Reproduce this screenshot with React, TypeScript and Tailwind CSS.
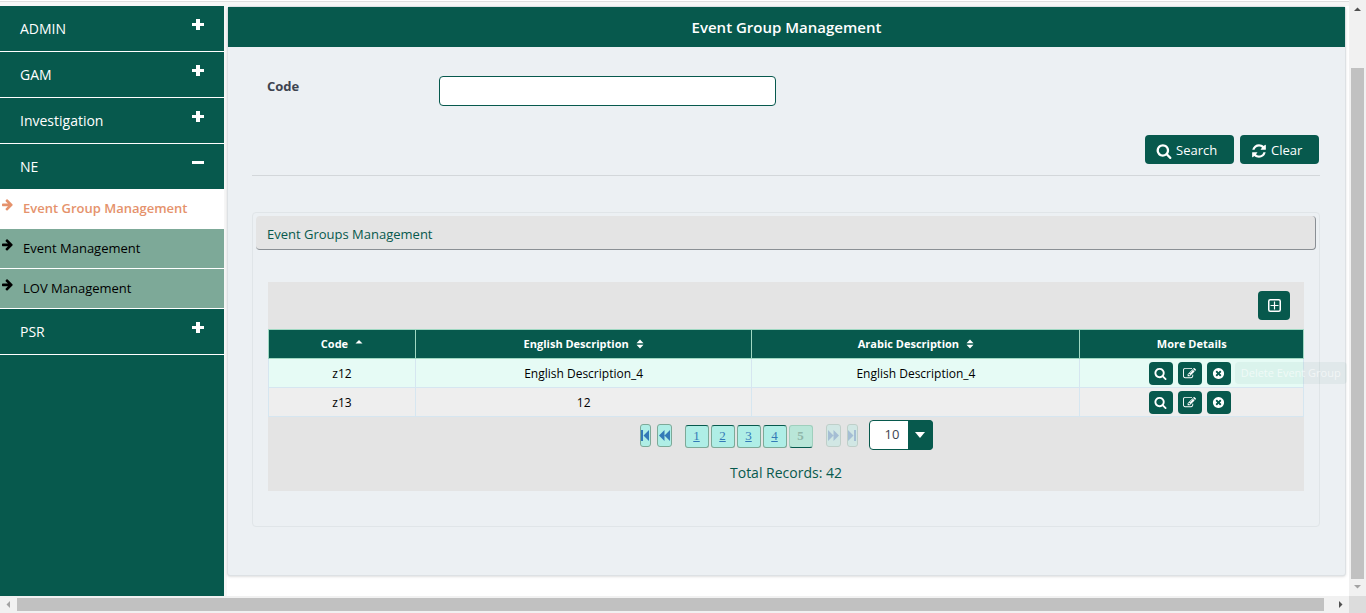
import React, { useState } from "react";

const PATHS = {
  search:
    "M1216 832q0-185-131.5-316.5t-316.5-131.5-316.5 131.5-131.5 316.5 131.5 316.5 316.5 131.5 316.5-131.5 131.5-316.5zm512 832q0 52-38 90t-90 38q-54 0-90-38l-343-342q-179 124-399 124-143 0-273.5-55.5t-225-150-150-225-55.5-273.5 55.5-273.5 150-225 225-150 273.5-55.5 273.5 55.5 225 150 150 225 55.5 273.5q0 220-124 399l343 343q37 37 37 90z",
  refresh:
    "M1639 1056q0 5-1 7-64 268-268 434.5t-478 166.5q-146 0-282.5-55t-243.5-157l-129 129q-19 19-45 19t-45-19-19-45v-448q0-26 19-45t45-19h448q26 0 45 19t19 45-19 45l-137 137q71 66 161 102t187 36q134 0 250-65t186-179q11-17 53-117 8-23 30-23h192q13 0 22.5 9.5t9.5 22.5zm25-800v448q0 26-19 45t-45 19h-448q-26 0-45-19t-19-45 19-45l138-138q-148-137-349-137-134 0-250 65t-186 179q-11 17-53 117-8 23-30 23h-199q-13 0-22.5-9.5t-9.5-22.5v-7q65-268 270-434.5t480-166.5q146 0 284 55.5t245 156.5l130-129q19-19 45-19t45 19 19 45z",
  edit:
    "M888 1184l116-116-152-152-116 116v56h96v96h56zm440-720q-16-16-33 1l-350 350q-17 17-1 33t33-1l350-350q17-17 1-33zm80 594v190q0 119-84.5 203.5t-203.5 84.5h-832q-119 0-203.5-84.5t-84.5-203.5v-832q0-119 84.5-203.5t203.5-84.5h832q63 0 117 25 15 7 18 23 3 17-9 29l-49 49q-14 14-32 8-23-6-45-6h-832q-66 0-113 47t-47 113v832q0 66 47 113t113 47h832q66 0 113-47t47-113v-126q0-13 9-22l64-64q15-15 35-7t20 29zm-96-738l288 288-672 672h-288v-288zm444 132l-92 92-288-288 92-92q28-28 68-28t68 28l152 152q28 28 28 68t-28 68z",
  remove:
    "M1277 1122q0-26-19-45l-181-181 181-181q19-19 19-45 0-27-19-46l-90-90q-19-19-46-19-26 0-45 19l-181 181-181-181q-19-19-45-19-27 0-46 19l-90 90q-19 19-19 46 0 26 19 45l181 181-181 181q-19 19-19 45 0 27 19 46l90 90q19 19 46 19 26 0 45-19l181-181 181 181q19 19 45 19 27 0 46-19l90-90q19-19 19-46zm387-226q0 209-103 385.5t-279.5 279.5-385.5 103-385.5-103-279.5-279.5-103-385.5 103-385.5 279.5-279.5 385.5-103 385.5 103 279.5 279.5 103 385.5z",
  arrow:
    "M1472 960q0 54-37 91l-651 651q-39 37-91 37-51 0-90-37l-75-75q-38-38-38-91t38-91l293-293h-704q-52 0-84.5-37.5t-32.5-90.5v-128q0-53 32.5-90.5t84.5-37.5h704l-293-294q-38-36-38-90t38-90l75-75q38-38 90-38 53 0 91 38l651 651q37 35 37 90z",
};

function Icon({ name, className }: { name: keyof typeof PATHS; className: string }) {
  return (
    <svg viewBox="0 0 1792 1792" fill="currentColor" className={className} aria-hidden="true">
      <path d={PATHS[name]} />
    </svg>
  );
}

function Toggle({ open }: { open: boolean }) {
  return (
    <svg viewBox="0 0 12 12" fill="currentColor" className="mb-2 size-3" aria-hidden="true">
      <path d={open ? "M0 4h12v3H0z" : "M0 4h4V0h4v4h4v3H8v4H4V7H0z"} />
    </svg>
  );
}

function MenuHead({ label, open = false }: { label: string; open?: boolean }) {
  return (
    <button
      aria-expanded={open}
      className={
        "flex w-full items-center justify-between px-5 text-sm text-white " +
        (open ? "h-[45px]" : "h-[46px] border-b border-white")
      }
    >
      <span>{label}</span>
      <Toggle open={open} />
    </button>
  );
}

function MenuLink({ label, active = false }: { label: string; active?: boolean }) {
  return (
    <a
      href="#"
      className={
        "flex h-10 items-center border-b border-white pl-[2px] text-[13px] " +
        (active ? "bg-white font-semibold text-[#e5926c]" : "bg-[#7da998] text-black")
      }
    >
      <Icon name="arrow" className="mr-2 mb-2 size-[13px]" />
      <span>{label}</span>
    </a>
  );
}

function RowButton({ name, label }: { name: "search" | "edit" | "remove"; label: string }) {
  return (
    <button
      aria-label={label}
      className="flex h-[23px] w-6 items-center justify-center rounded bg-[#07594d] text-white"
    >
      <Icon name={name} className="size-[13px]" />
    </button>
  );
}

function Sort({ up = false }: { up?: boolean }) {
  return (
    <svg viewBox="0 0 8 10" fill="currentColor" className="ml-[7px] h-[10px] w-2" aria-hidden="true">
      {up ? <path d="M.5 4.500 4 1l3.500 3.500z" /> : <path d="M.5 4.300 4 .5l3.500 3.800zM.5 5.700h7L4 9.500z" />}
    </svg>
  );
}

function Jump({ label, wide, flip, disabled }: { label: string; wide: boolean; flip: boolean; disabled: boolean }) {
  return (
    <button
      aria-label={label}
      disabled={disabled}
      className={
        "flex h-[23px] items-center justify-center rounded-[3px] border border-[#7da998] bg-[#afeee6] text-[#337ab7] disabled:opacity-35 " +
        (wide ? "w-[15px]" : "w-[11px]")
      }
    >
      <svg
        viewBox={wide ? "0 0 11 11" : "0 0 8 11"}
        fill="currentColor"
        className={(wide ? "h-[11px] w-[11px] shrink-0" : "h-[11px] w-2 shrink-0") + (flip ? " rotate-180" : "")}
        aria-hidden="true"
      >
        <path d={wide ? "M5.5 0v11L0 5.5zM11 0v11L5.5 5.5z" : "M0 0h2v11H0zM8 0v11L2.5 5.5z"} />
      </svg>
    </button>
  );
}

const ROWS = [
  { code: "z12", english: "English Description_4", arabic: "English Description_4", tip: true },
  { code: "z13", english: "12", arabic: "", tip: false },
];

const CELL = "h-[29px] border border-[#d6e6f0] p-0 text-center";
const TEXT_CELL = "h-[29px] border border-[#d6e6f0] px-0 pt-[2px] pb-0 text-center";
const HEAD = "h-[29px] border border-[#9fd8c2] p-0 font-bold";

export default function App() {
  const [code, setCode] = useState("");
  return (
    <div className="flex min-h-screen flex-col bg-white font-['Open_Sans','Noto_Sans',sans-serif] text-black">
      <div className="flex flex-1">
        <div className="flex min-w-0 flex-1 flex-col">
          <div className="h-[6px] border-t border-white bg-[#f7f7f7]">
            <div className="h-px bg-[#dfdfdf]" />
          </div>
          <div className="flex flex-1">
            <nav className="w-56 shrink-0 bg-[#07594d]">
              <MenuHead label="ADMIN" />
              <MenuHead label="GAM" />
              <MenuHead label="Investigation" />
              <MenuHead label="NE" open />
              <MenuLink label="Event Group Management" active />
              <MenuLink label="Event Management" />
              <MenuLink label="LOV Management" />
              <MenuHead label="PSR" />
            </nav>
            <div className="w-[3px] shrink-0 bg-[#f7f7f7]" />
            <main className="min-w-0 flex-1 pr-[3px]">
              <section className="rounded-[3px] border border-[#dde1e4] bg-[#ecf0f3] pb-12 shadow-sm">
                <h1 className="flex h-10 items-center justify-center bg-[#07594d] text-[15px] font-semibold text-white">
                  Event Group Management
                </h1>
                <div className="pr-[25px] pl-6">
                  <div className="flex px-[15px] pt-[29px]">
                    <label htmlFor="code" className="w-[172px] text-[13px] leading-5 font-bold text-[#3e4450]">
                      Code
                    </label>
                    <input
                      id="code"
                      value={code}
                      onChange={(e) => setCode(e.target.value)}
                      className="h-[30px] w-[337px] rounded border border-[#07594d] bg-white px-3 text-[13px] outline-none"
                    />
                  </div>
                  <div className="mt-[29px] flex justify-end gap-[6px] border-b border-[#d3d7da] pr-px pb-[11px]">
                    <button className="flex h-[29px] w-[89px] items-center gap-1 rounded bg-[#07594d] pt-[2px] pl-[11px] text-[13px] text-white">
                      <Icon name="search" className="size-4" />
                      Search
                    </button>
                    <button className="flex h-[29px] w-[79px] items-center gap-1 rounded bg-[#07594d] pt-[2px] pl-[11px] text-[13px] text-white">
                      <Icon name="refresh" className="size-4" />
                      Clear
                    </button>
                  </div>
                  <div className="mt-9 rounded border border-[#e0e5e8] px-[3px] pt-[3px] pb-[35px]">
                    <h2 className="flex h-[34px] items-center rounded border-r border-b border-[#8a8f94] bg-[#e4e4e4] px-[11px] pt-1 text-[13px] text-[#07594d]">
                      Event Groups Management
                    </h2>
                    <div className="mx-3 mt-8 bg-[#e4e4e4]">
                      <div className="flex h-[47px] items-center justify-end pr-[14px]">
                        <button
                          aria-label="Add"
                          className="flex h-[29px] w-8 items-center justify-center rounded bg-[#07594d] text-white"
                        >
                          <svg viewBox="0 0 13 13" className="size-[13px]" fill="none" stroke="currentColor" aria-hidden="true">
                            <rect x="0.75" y="0.75" width="11.5" height="11.5" rx="1.5" strokeWidth="1.5" />
                            <path d="M6.5 2.500v8M2.500 6.500h8" strokeWidth="1.2" />
                          </svg>
                        </button>
                      </div>
                      <table className="w-full table-fixed border-collapse text-[12px] leading-4">
                        <colgroup>
                          <col className="w-[14.2%]" />
                          <col className="w-[32.5%]" />
                          <col className="w-[31.7%]" />
                          <col className="w-[21.6%]" />
                        </colgroup>
                        <thead className="bg-[#07594d] text-[11px] text-white">
                          <tr>
                            <th className={HEAD}>
                              <span className="flex items-center justify-center">
                                Code
                                <Sort up />
                              </span>
                            </th>
                            <th className={HEAD}>
                              <span className="flex items-center justify-center">
                                English Description
                                <Sort />
                              </span>
                            </th>
                            <th className={HEAD}>
                              <span className="flex items-center justify-center">
                                Arabic Description
                                <Sort />
                              </span>
                            </th>
                            <th className={HEAD}>More Details</th>
                          </tr>
                        </thead>
                        <tbody>
                          {ROWS.map((row) => (
                            <tr key={row.code} className={row.tip ? "bg-[#e6fbf5]" : "bg-[#eeeeee]"}>
                              <td className={TEXT_CELL}>{row.code}</td>
                              <td className={TEXT_CELL}>{row.english}</td>
                              <td className={TEXT_CELL}>{row.arabic}</td>
                              <td className={CELL}>
                                <div className="flex justify-center gap-[5px] pr-1">
                                  <RowButton name="search" label="View" />
                                  <RowButton name="edit" label="Edit" />
                                  <div className="relative">
                                    <RowButton name="remove" label="Delete" />
                                    {row.tip && (
                                      <div
                                        role="tooltip"
                                        className="absolute top-0 left-full ml-1 rounded bg-[#07594d]/5 px-[6px] text-[11px] leading-[22px] whitespace-nowrap text-white/60"
                                      >
                                        Delete Event Group
                                      </div>
                                    )}
                                  </div>
                                </div>
                              </td>
                            </tr>
                          ))}
                        </tbody>
                      </table>
                      <div className="flex items-center justify-center pt-[3px]">
                        <div className="flex gap-[6px]">
                          <Jump label="First page" wide={false} flip={false} disabled={false} />
                          <Jump label="Previous page" wide flip={false} disabled={false} />
                        </div>
                        <div className="mx-[13px] flex gap-[2px] pt-[2px] font-['Liberation_Serif',serif] text-[13px]">
                          {["1", "2", "3", "4"].map((n) => (
                            <a
                              key={n}
                              href="#"
                              className="flex h-[23px] w-6 items-center justify-center rounded-[3px] border border-[#7da998] border-t-[#07594d] bg-[#afeee6] text-[#337ab7] underline"
                            >
                              {n}
                            </a>
                          ))}
                          <span className="flex h-[23px] w-6 items-center justify-center rounded-[3px] border border-[#9fcfbd] border-b-[#07594d] bg-[#b9e6d8] font-bold text-[#8fb5a8]">
                            5
                          </span>
                        </div>
                        <div className="flex gap-[6px]">
                          <Jump label="Next page" wide flip disabled />
                          <Jump label="Last page" wide={false} flip disabled />
                        </div>
                        <div className="relative ml-[11px] h-[30px] w-16">
                          <select
                            aria-label="Rows per page"
                            defaultValue="10"
                            className="h-full w-full appearance-none rounded border border-[#07594d] bg-white pl-[15px] text-[13px] text-[#3e4450]"
                          >
                            <option>10</option>
                            <option>20</option>
                            <option>50</option>
                          </select>
                          <span className="pointer-events-none absolute inset-y-0 right-0 flex w-[25px] items-center justify-center rounded-r bg-[#07594d] text-white">
                            <svg viewBox="0 0 10 6" fill="currentColor" className="h-[6px] w-[10px]" aria-hidden="true">
                              <path d="M0 0h10L5 6z" />
                            </svg>
                          </span>
                        </div>
                      </div>
                      <p className="pt-[13px] pb-2 text-center text-sm leading-5 font-medium text-[#07594d]">
                        Total Records: 42
                      </p>
                    </div>
                  </div>
                </div>
              </section>
            </main>
          </div>
        </div>
        <div className="flex w-[17px] shrink-0 flex-col bg-[#f1f1f1] px-[2px]" aria-hidden="true">
          <svg viewBox="0 0 13 68" fill="#505050" className="h-[68px] w-[13px]">
            <path d="M3 11h7L6.5 7.5z" />
          </svg>
          <div className="flex-1 bg-[#c1c1c1]" />
          <svg viewBox="0 0 13 17" fill="#a3a3a3" className="h-[17px] w-[13px]">
            <path d="M3 6h7L6.5 9.5z" />
          </svg>
        </div>
      </div>
      <div className="flex h-[17px] bg-[#f1f1f1]" aria-hidden="true">
        <svg viewBox="0 0 17 17" fill="#a3a3a3" className="size-[17px]">
          <path d="M10 5v7L6.5 8.5z" />
        </svg>
        <div className="my-[2px] flex-1 bg-[#c1c1c1]" />
        <svg viewBox="0 0 25 17" fill="#505050" className="h-[17px] w-[25px]">
          <path d="M15 5v7l3.500-3.500z" />
        </svg>
        <div className="w-[17px] bg-[#dcdcdc]" />
      </div>
    </div>
  );
}
